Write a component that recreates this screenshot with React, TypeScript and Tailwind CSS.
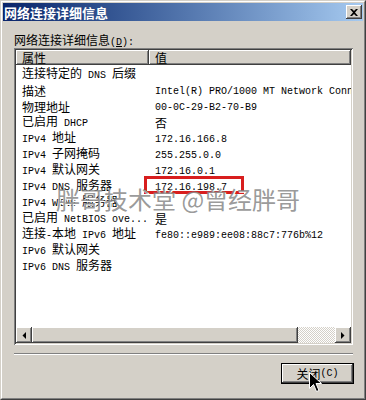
import React from "react";

type Row = { name: string; value: string };

const ROWS: Row[] = [
  { name: "连接特定的 DNS 后缀", value: "" },
  { name: "描述", value: "Intel(R) PRO/1000 MT Network Connection" },
  { name: "物理地址", value: "00-0C-29-B2-70-B9" },
  { name: "已启用 DHCP", value: "否" },
  { name: "IPv4 地址", value: "172.16.166.8" },
  { name: "IPv4 子网掩码", value: "255.255.0.0" },
  { name: "IPv4 默认网关", value: "172.16.0.1" },
  { name: "IPv4 DNS 服务器", value: "172.16.198.7" },
  { name: "IPv4 WINS 服务器", value: "" },
  { name: "已启用 NetBIOS ove...", value: "是" },
  { name: "连接-本地 IPv6 地址", value: "fe80::e989:ee08:88c7:776b%12" },
  { name: "IPv6 默认网关", value: "" },
  { name: "IPv6 DNS 服务器", value: "" },
];

const CJK = /([\u2e80-\u9fff\uff00-\uffef]+)/;

/* SimSun-like: CJK 12px, latin half width (6px) */
function Mixed({ text }: { text: string }) {
  return (
    <>
      {text
        .split(CJK)
        .filter(Boolean)
        .map((part, i) =>
          CJK.test(part) ? (
            <span key={i} className="font-['Noto_Sans_CJK_SC',sans-serif] text-[12px]">
              {part}
            </span>
          ) : (
            <span key={i} className="font-['Liberation_Mono',monospace] text-[10px] whitespace-pre">
              {part}
            </span>
          )
        )}
    </>
  );
}

const raised =
  "bg-[#d4d0c8] shadow-[inset_-1px_-1px_#404040,inset_1px_1px_#ffffff,inset_-2px_-2px_#808080,inset_2px_2px_#d4d0c8]";

function Arrow({ dir }: { dir: "left" | "right" }) {
  return (
    <div className={`w-4 h-4 flex items-center justify-center ${raised}`}>
      <svg width="4" height="7" viewBox="0 0 4 7">
        {dir === "left" ? (
          <polygon points="4,0 4,7 0.5,3.5" fill="#000" />
        ) : (
          <polygon points="0,0 0,7 3.5,3.5" fill="#000" />
        )}
      </svg>
    </div>
  );
}

export default function App() {
  return (
    <div className="relative w-[366px] h-[400px] bg-[#d4d0c8] border border-t-[#d4d0c8] border-l-[#d4d0c8] border-r-[#404040] border-b-[#404040] text-black">
      <div className="h-full border border-t-white border-l-white border-r-[#808080] border-b-[#808080] p-[1px] flex flex-col">
        {/* TITLE */}
        <div className="h-[18px] flex items-center justify-between bg-linear-to-r from-[#0a246a] to-[#a6caf0] pl-[1px] pr-[1px]">
          <span className="text-white font-bold text-[13px] leading-none font-['Noto_Sans_CJK_SC',sans-serif]">
            网络连接详细信息
          </span>
          <div className={`w-4 h-[14px] flex items-center justify-center ${raised}`}>
            <svg width="8" height="7" viewBox="0 0 8 7">
              <path d="M0 0h2l2 2 2-2h2L5 3.5 8 7H6L4 5 2 7H0l3-3.5z" fill="#000" />
            </svg>
          </div>
        </div>

        {/* BODY */}
        <div className="flex-1 flex flex-col pl-[11px] pr-[10px]">
          <div className="mt-[11px] h-[14px] leading-[14px] whitespace-nowrap">
            <span className="font-['Noto_Sans_CJK_SC',sans-serif] text-[12px]">网络连接详细信息</span>
            <span className="font-['Liberation_Mono',monospace] text-[10px]">
              (<span className="underline">D</span>):
            </span>
          </div>

          {/* LIST */}
          <div className="mt-[2px] h-[297px] p-[2px] flex flex-col shadow-[inset_1px_1px_#808080,inset_-1px_-1px_#ffffff,inset_2px_2px_#404040,inset_-2px_-2px_#d4d0c8]">
            <div className="flex-1 bg-white flex flex-col overflow-hidden">
              <div className="flex h-[15px] shrink-0">
                <div className={`w-[133px] h-full flex items-center pl-[6px] ${raised}`}>
                  <Mixed text="属性" />
                </div>
                <div className={`flex-1 h-full flex items-center pl-[6px] ${raised}`}>
                  <Mixed text="值" />
                </div>
              </div>

              <div className="flex-1 pt-[1px]">
                {ROWS.map((r) => (
                  <div key={r.name} className="flex h-4 items-center leading-4 whitespace-nowrap">
                    <div className="w-[133px] pl-[6px] overflow-hidden">
                      <Mixed text={r.name} />
                    </div>
                    <div className="flex-1 pl-[6px] overflow-hidden">
                      <Mixed text={r.value} />
                    </div>
                  </div>
                ))}
              </div>

              {/* H SCROLLBAR */}
              <div className="flex h-4 shrink-0">
                <Arrow dir="left" />
                <div className={`w-[266px] h-4 ${raised}`} />
                <div className="flex-1 h-4 bg-[repeating-conic-gradient(#d4d0c8_0_25%,#ffffff_0_50%)] bg-[length:2px_2px]" />
                <Arrow dir="right" />
              </div>
            </div>
          </div>

          <div className="mt-[8px] h-[2px] border-t border-t-[#808080] border-b border-b-white" />

          <div className="mt-[8px] flex justify-end -mr-[1px]">
            <button className="w-[73px] h-[21px] border border-black p-0">
              <div className={`w-full h-full flex items-center justify-center ${raised}`}>
                <Mixed text="关闭" />
                <span className="font-['Liberation_Mono',monospace] text-[10px]">(C)</span>
              </div>
            </button>
          </div>
        </div>
      </div>

      {/* red highlight */}
      <div className="absolute left-[143px] top-[175px] w-[100px] h-[18px] border-[3px] border-[#d81e1e]" />

      {/* watermark */}
      <div className="absolute left-[55px] top-[186px] text-[24px] leading-none whitespace-nowrap text-[#808080]/80 font-['Noto_Sans_CJK_SC',sans-serif] [text-shadow:1px_1px_0_#ffffff]">
        胖哥技术堂 @曾经胖哥
      </div>

      {/* cursor */}
      <svg className="absolute left-[308px] top-[371px]" width="13" height="21" viewBox="0 0 13 21">
        <path d="M0.5 0.5v16l4-4 3 7 2.5-1-3-7h5.5z" fill="#000" stroke="#fff" strokeWidth="1" />
      </svg>
    </div>
  );
}
